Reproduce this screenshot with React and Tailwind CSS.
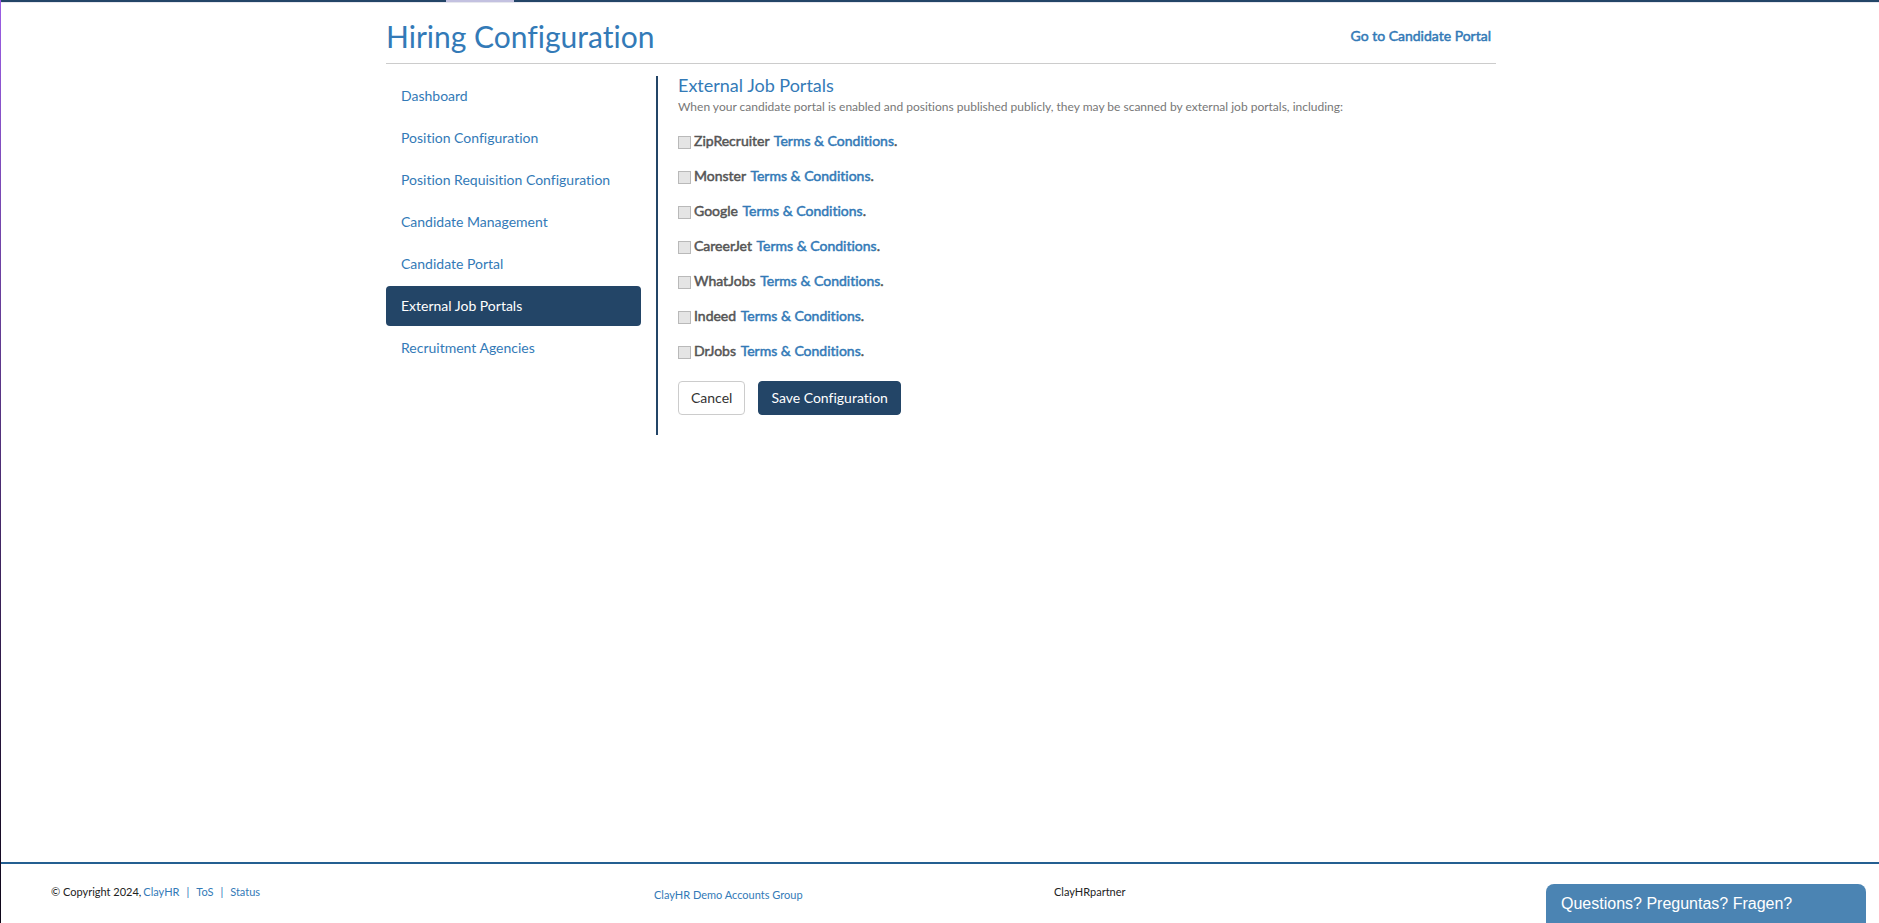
const navItems = [
  'Dashboard',
  'Position Configuration',
  'Position Requisition Configuration',
  'Candidate Management',
  'Candidate Portal',
  'External Job Portals',
  'Recruitment Agencies',
];

const portals = ['ZipRecruiter', 'Monster', 'Google', 'CareerJet', 'WhatJobs', 'Indeed', 'DrJobs'];

const strong = '[-webkit-text-stroke:0.5px_currentColor]';

function SideNav() {
  return (
    <nav className="w-1/4 px-[15px]">
      <ul className="flex flex-col gap-0.5">
        {navItems.map((item) => (
          <li key={item}>
            <a
              href="#"
              className={
                item === 'External Job Portals'
                  ? 'block rounded bg-[#234567] px-[15px] py-2.5 text-white'
                  : 'block rounded px-[15px] py-2.5 text-[#337ab7]'
              }
            >
              {item}
            </a>
          </li>
        ))}
      </ul>
    </nav>
  );
}

function PortalRow({ name }) {
  const id = `portal-${name.toLowerCase()}`;
  return (
    <li className="flex h-5 items-center">
      <input
        id={id}
        type="checkbox"
        className="mt-0.5 mr-[3px] size-[13px] appearance-none border border-[#b9b9b9] bg-[#e5e5e5]"
      />
      <span className={`text-[#555] ${strong}`}>
        <label htmlFor={id}>{name}</label>{' '}
        <a href="#" className="ml-px text-[#337ab7]">Terms &amp; Conditions</a>.
      </span>
    </li>
  );
}

export default function App() {
  return (
    <div className="relative flex min-h-screen flex-col bg-white pl-px font-[Lato,sans-serif] text-sm text-[#333] [font-variant-ligatures:none]">
      <div className="absolute inset-y-0 left-0 w-px bg-linear-to-b from-[#9b5de5] to-[#0d0618]" />
      <div className="flex h-[3px] border-b border-[#e7e7ee] bg-[#234567]">
        <div className="ml-[445px] w-[68px] bg-[#c3c1e0]" />
      </div>

      <div className="pl-0.5">
        <main className="mx-auto w-full max-w-[1140px]">
          <header className="mx-[15px] flex h-[61px] items-center justify-between border-b border-[#ccc] pt-2.5 pr-[5px]">
            <h1 className="pb-1 text-[30px] leading-8 text-[#337ab7]">Hiring Configuration</h1>
            <a href="#" className={`pb-1 text-[#337ab7] ${strong}`}>Go to Candidate Portal</a>
          </header>

          <div className="mt-3 flex">
            <SideNav />
            <section className="flex-1 border-l-2 border-[#234567] pb-5 pl-5">
              <h2 className="text-lg leading-[18px] text-[#337ab7]">External Job Portals</h2>
              <p className="pt-1 text-xs leading-[18px] text-[#777]">
                When your candidate portal is enabled and positions published publicly, they may be scanned by external job portals, including:
              </p>
              <ul className="mt-[15px] flex flex-col gap-[15px]">
                {portals.map((name) => (
                  <PortalRow key={name} name={name} />
                ))}
              </ul>
              <div className="mt-5 flex gap-[13px]">
                <button type="button" className="rounded border border-[#ccc] bg-white px-3 py-1.5 text-[#333]">Cancel</button>
                <button type="button" className="rounded border border-[#234567] bg-[#234567] px-3 py-1.5 text-white">Save Configuration</button>
              </div>
            </section>
          </div>
        </main>
      </div>

      <footer className="mt-auto grid h-[61px] grid-cols-[603fr_400fr_825fr] border-t-2 border-[#245f91] pt-[18px] pl-[50px] text-[11px] leading-5 text-[#222]">
        <div className="flex">
          <span className="mr-0.5">© Copyright 2024,</span>
          <div className="flex gap-[7px] text-[#337ab7]">
            <a href="#">ClayHR</a>
            <span>|</span>
            <a href="#">ToS</a>
            <span>|</span>
            <a href="#">Status</a>
          </div>
        </div>
        <div className="pt-[3px]">
          <a href="#" className="text-[#337ab7]">ClayHR Demo Accounts Group</a>
        </div>
        <div>ClayHRpartner</div>
      </footer>

      <button
        type="button"
        className="fixed right-[13px] bottom-0 h-[39px] w-80 rounded-t-lg bg-[#4b84b3] px-[15px] text-left font-['Liberation_Sans',sans-serif] text-base text-white"
      >
        Questions? Preguntas? Fragen?
      </button>
    </div>
  );
}
